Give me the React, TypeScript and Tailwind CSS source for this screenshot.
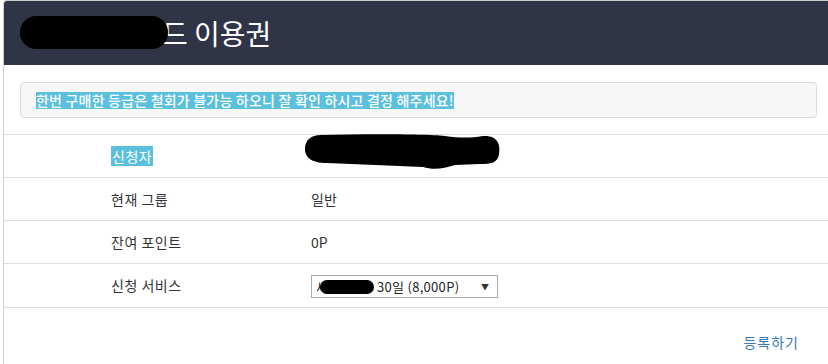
import React from "react";

const font = { fontFamily: "'Noto Sans CJK KR', 'Liberation Sans', sans-serif" };

function Row({
  label,
  children,
  h = "h-[43px]",
}: {
  label: React.ReactNode;
  children: React.ReactNode;
  h?: string;
}) {
  return (
    <div className={`flex items-center border-b border-[#ddd] ${h}`}>
      <div className="w-[307px] pl-[107px] text-[14px] leading-[19px] tracking-[0.5px] text-[#333]">{label}</div>
      <div className="relative flex-1 text-[14px] leading-[19px] text-[#333]">{children}</div>
    </div>
  );
}

export default function App() {
  return (
    <div className="w-[828px] h-[364px] bg-white overflow-hidden pl-[3px]" style={font}>
      <div className="h-full border-l border-t border-[#cfcfcf] rounded-tl-[4px] overflow-hidden">
        <div className="h-[64px] bg-[#2f3546] flex items-center pl-[16px]">
          <span className="relative z-10 inline-block w-[148px] h-[33px] rounded-[16px] bg-black mt-[-2px]" />
          <span className="ml-[-6px] text-[28px] leading-[34px] text-white">드 이용권</span>
        </div>

        <div className="mt-[17px] ml-[16px] mr-[11px] h-[36px] border border-[#dcdcdc] rounded-[4px] bg-[#f7f7f7] flex items-center pl-[15px]">
          <span className="bg-[#5bc0de] text-white text-[14px] leading-[17px] tracking-[0.2px] font-medium">
            한번 구매한 등급은 철회가 불가능 하오니 잘 확인 하시고 결정 해주세요!
          </span>
        </div>

        <div className="mt-[16px] border-t border-[#ddd]">
          <Row label={<span className="bg-[#5bc0de] text-white px-[1px]">신청자</span>}>
            <svg
              className="absolute left-[-6px] top-[-13px]"
              width="196"
              height="38"
              viewBox="0 0 196 38"
            >
              <path
                d="M16 1 C60 0 120 0 140 2 C155 4 165 4 178 2 C192 1 196 10 194 20 C193 29 186 30 175 30 L150 31 C138 35 128 36 118 33 L22 29 C6 29 0 23 0 15 C0 6 6 1 16 1 Z"
                fill="#000"
              />
            </svg>
            <span className="invisible">홍길동</span>
          </Row>
          <Row label="현재 그룹">일반</Row>
          <Row label="잔여 포인트">0P</Row>
          <Row label="신청 서비스" h="h-[44px]">
            <div className="w-[187px] h-[23px] border border-[#a9a9a9] bg-white flex items-center pl-[4px] pr-[8px] text-[13px] text-[#222] mt-[2px]">
              <span>세</span>
              <span className="relative z-10 inline-block w-[54px] h-[14px] rounded-[7px] bg-black ml-[-8px] mr-[3px]" />
              <span className="tracking-[0.3px]">30일 (8,000P)</span>
              <span className="ml-auto text-[8px] leading-[8px] text-[#333]">▼</span>
            </div>
          </Row>
        </div>

        <div className="flex justify-end pr-[29px] mt-[24px]">
          <span className="text-[14px] leading-[20px] tracking-[1px] text-[#337ab7]">등록하기</span>
        </div>
      </div>
    </div>
  );
}
